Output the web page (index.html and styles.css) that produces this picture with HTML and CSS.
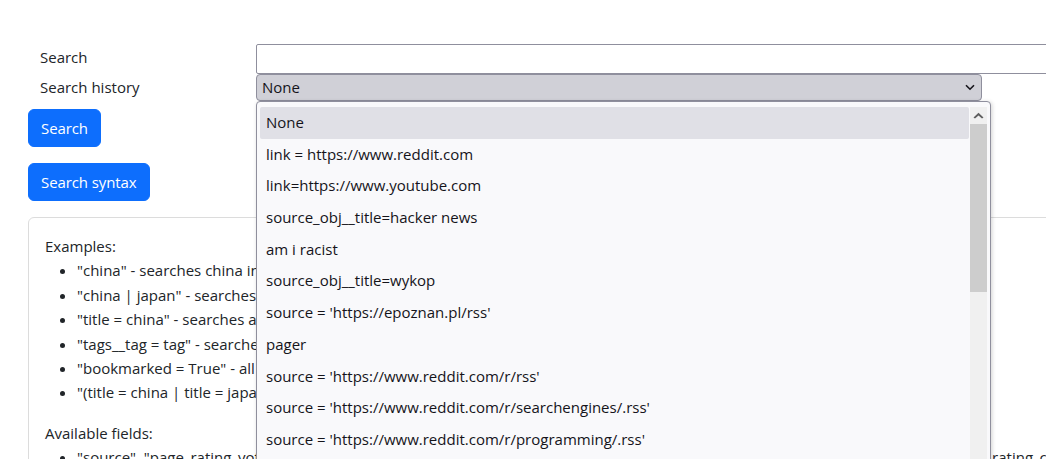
FILE: index.html
```html
<!DOCTYPE html>
<html lang="en">
<head>
<meta charset="utf-8">
<title>Search</title>
<link rel="stylesheet" href="styles.css">
</head>
<body>
<div class="page">
  <table class="form-table">
    <tr class="row-search">
      <th>Search</th>
      <td><input class="field-input" type="text"></td>
    </tr>
    <tr class="row-history">
      <th>Search history</th>
      <td>
        <div class="select">
          <span>None</span>
          <svg class="select-arrow" width="10" height="7" viewBox="0 0 10 7"><path d="M1 1.2 L5 5.2 L9 1.2" fill="none" stroke="#15141a" stroke-width="1.6"/></svg>
        </div>
      </td>
    </tr>
  </table>
  <div class="btn-row"><button class="btn">Search</button></div>
  <div class="btn-row"><button class="btn">Search syntax</button></div>
  <div class="card">
    <p class="card-text">Examples:</p>
    <ul class="card-list">
      <li>"china" - searches china in title, description, link</li>
      <li>"china | japan" - searches china or japan in title, description, link</li>
      <li>"title = china" - searches all entries with title china</li>
      <li>"tags__tag = tag" - searches entries with the tag</li>
      <li>"bookmarked = True" - all bookmarked entries</li>
      <li>"(title = china | title = japan) &amp; bookmarked = True" - bookmarked entries</li>
    </ul>
    <p class="card-text">Available fields:</p>
    <ul class="card-list">
      <li>"source", "page_rating_votes", "page_rating_visits", "page_rating", "title", "description", "link", "date_published", "id", "album", "page_rating_contents", "bookmarked", "language", "user"</li>
    </ul>
  </div>
</div>
<div class="popup">
  <ul class="popup-list">
    <li class="popup-item selected">None</li>
    <li class="popup-item">link = https://www.reddit.com</li>
    <li class="popup-item">link=https://www.youtube.com</li>
    <li class="popup-item">source_obj__title=hacker news</li>
    <li class="popup-item">am i racist</li>
    <li class="popup-item">source_obj__title=wykop</li>
    <li class="popup-item">source = 'https://epoznan.pl/rss'</li>
    <li class="popup-item">pager</li>
    <li class="popup-item">source = 'https://www.reddit.com/r/rss'</li>
    <li class="popup-item">source = 'https://www.reddit.com/r/searchengines/.rss'</li>
    <li class="popup-item">source = 'https://www.reddit.com/r/programming/.rss'</li>
    <li class="popup-item">source = 'https://www.reddit.com/r/python/.rss'</li>
  </ul>
  <div class="scrollbar">
    <div class="scroll-arrow">
      <svg width="11" height="7" viewBox="0 0 11 7"><path d="M0.5 5.5 L5.5 0.8 L10.5 5.5 L9 6.6 L5.5 3.4 L2 6.6 Z" fill="#606060"/></svg>
    </div>
    <div class="scroll-thumb"></div>
  </div>
</div>
</body>
</html>
```
FILE: styles.css
```css
html {
  overflow: hidden;
}
body {
  margin: 0;
  font-family: "Open Sans", "Noto Sans", sans-serif;
  font-size: 15px;
  line-height: 24px;
  color: #212529;
  background: #ffffff;
}
.page {
  padding: 44px 0 0 28px;
  width: 1300px;
}
.form-table {
  border-collapse: collapse;
  border-spacing: 0;
  margin-bottom: 8px;
}
.form-table th {
  text-align: left;
  font-weight: normal;
  padding: 0 12px;
  width: 204px;
  vertical-align: middle;
  white-space: nowrap;
}
.row-search th {
  padding-bottom: 5px;
}
.row-history th {
  padding-bottom: 2px;
}
.form-table td {
  padding: 0;
}
.field-input {
  display: block;
  box-sizing: border-box;
  width: 820px;
  height: 30px;
  margin: 0;
  border: 1px solid #8f8f9d;
  border-radius: 2px;
  background: #ffffff;
  font: inherit;
}
.select {
  box-sizing: border-box;
  width: 726px;
  height: 27px;
  border: 1px solid #8f8f9d;
  border-radius: 4px;
  background: #d0d0d7;
  color: #15141a;
  display: flex;
  align-items: center;
  justify-content: space-between;
  padding: 0 6px 0 5px;
  line-height: 25px;
}
.select-arrow {
  display: block;
}
.btn-row {
  margin-bottom: 16px;
}
.btn {
  font-family: inherit;
  font-size: 15px;
  line-height: 24px;
  letter-spacing: -0.1px;
  color: #ffffff;
  background: #0d6efd;
  border: 1px solid #0d6efd;
  border-radius: 6px;
  padding: 6px 12px;
  margin: 0;
  display: block;
}
.card {
  box-sizing: border-box;
  width: 1250px;
  border: 1px solid #dcdcdc;
  border-radius: 6px;
  padding: 16px;
  line-height: 24.4px;
}
.card-text {
  margin: 0;
}
.card-list {
  margin: 0 0 16px;
  padding-left: 32px;
}
.popup {
  position: absolute;
  left: 256px;
  top: 101px;
  box-sizing: border-box;
  width: 735px;
  height: 400px;
  border: 1px solid #8f8f9d;
  border-radius: 4px;
  background: #f9f9fb;
  box-shadow: 1px 1px 4px rgba(0, 0, 0, 0.18);
  padding: 4px 3px 0 3px;
  display: flex;
  overflow: hidden;
}
.popup-list {
  list-style: none;
  margin: 0;
  padding: 1px 0 0;
  flex: 1;
  color: #15141a;
}
.popup-item {
  height: 31.7px;
  line-height: 31.7px;
  padding-left: 6px;
  white-space: nowrap;
}
.popup-item.selected {
  background: #e0e0e6;
  border-radius: 2px;
  margin-right: 1px;
}
.scrollbar {
  width: 17px;
  flex-shrink: 0;
  background: #f0f0f0;
  margin-top: 1px;
}
.scroll-arrow {
  height: 17px;
  display: flex;
  align-items: center;
  justify-content: center;
}
.scroll-thumb {
  height: 168px;
  background: #cdcdcd;
}
```
